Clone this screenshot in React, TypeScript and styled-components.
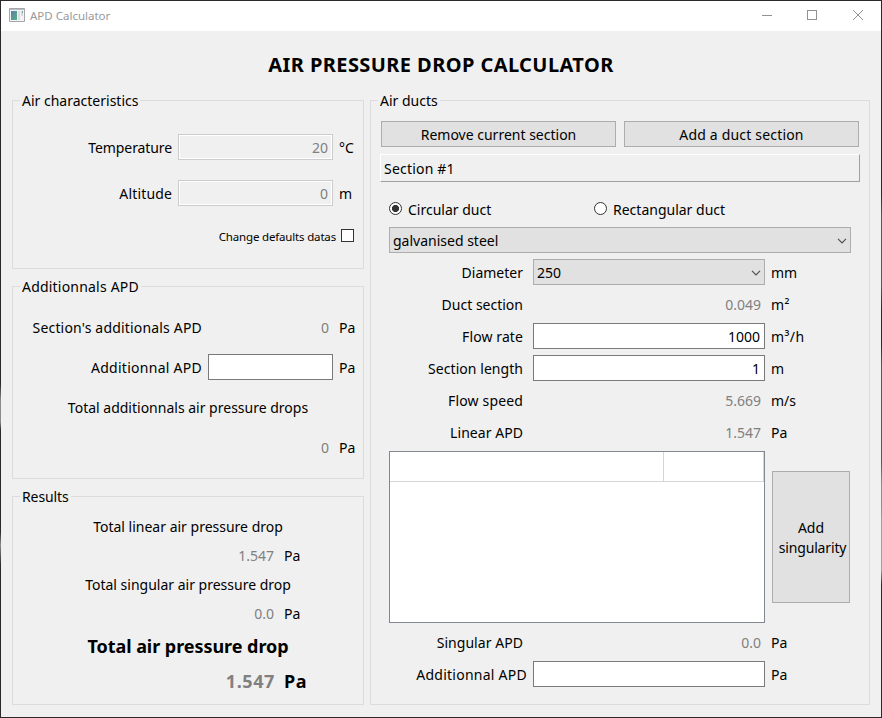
import React from 'react';
import styled, { createGlobalStyle, css } from 'styled-components';

const GlobalStyle = createGlobalStyle`
  * { box-sizing: border-box; }
  body {
    margin: 0;
    background: #f0f0f0;
    font-family: "Noto Sans", "Open Sans", sans-serif;
    font-size: 14px;
    line-height: 20px;
    color: #000;
  }
`;

const Window = styled.div`
  width: 882px;
  height: 718px;
  padding: 1px;
  background:
    linear-gradient(#2c282b 0 384px, #8a8a8a 400px 422px, #2c282b 430px 532px, #8a8a8a 545px, #2c282b 565px) left / 1px 100% no-repeat,
    linear-gradient(#2c282c 0 195px, #a8343c 215px 285px, #2c282c 310px 345px, #a8343c 365px 462px, #b08a4a 485px 505px, #a8ac3c 520px 570px, #2c282c 585px) right / 1px 100% no-repeat,
    #2c282b;
`;

const TitleBar = styled.header`
  display: flex;
  align-items: flex-start;
  height: 30px;
  padding-left: 8px;
  background: #fff;
`;

const WindowTitle = styled.span`
  flex: 1;
  padding: 5px 0 0 5px;
  font-size: 11.5px;
  color: #999;
`;

const AppIcon = styled.svg`
  display: block;
  width: 16px;
  height: 14px;
  margin-top: 7px;
`;

const WindowControls = styled.svg`
  display: block;
  width: 110px;
  height: 12px;
  margin: 8px 10px 0 0;
  fill: none;
  stroke: #929292;
`;

const Body = styled.main`
  display: flex;
  flex-direction: column;
  height: 686px;
  padding: 19px 11px 12px;
  background: #f0f0f0;
`;

const Heading = styled.h1`
  margin: 0;
  height: 50px;
  font-size: 20px;
  line-height: 30px;
  font-weight: 700;
  letter-spacing: 0.42px;
  text-align: center;
`;

const Columns = styled.div`
  display: grid;
  grid-template-columns: 352px 500px;
  column-gap: 6px;
`;

const LeftColumn = styled.div`
  display: flex;
  flex-direction: column;
  gap: 17px;
`;

const Group = styled.section<{ $height: number }>`
  display: flex;
  flex-direction: column;
  height: ${(p) => p.$height}px;
  border: 1px solid #dcdcdc;
`;

const Legend = styled.h2<{ $track?: number }>`
  align-self: flex-start;
  flex: none;
  margin: -10px 0 0 7px;
  padding: 0 2px;
  height: 20px;
  font-size: 14px;
  font-weight: 400;
  letter-spacing: ${(p) => p.$track ?? 0}px;
  background: #f0f0f0;
`;

const Row = styled.div<{ $top?: number }>`
  display: flex;
  flex: none;
  align-items: center;
  height: 26px;
  margin-top: ${(p) => p.$top ?? 0}px;
`;

type TextProps = { $track?: number; $bold?: boolean };

const textStyle = css<TextProps>`
  padding-top: 2px;
  white-space: nowrap;
  letter-spacing: ${(p) => p.$track ?? 0}px;
  ${(p) => p.$bold && 'font-size: 18px; font-weight: 700; line-height: 24px;'}
`;

const Label = styled.label<TextProps & { $width: number }>`
  ${textStyle}
  width: ${(p) => p.$width}px;
  text-align: right;
`;

const Unit = styled.span<TextProps & { $gap?: number }>`
  ${textStyle}
  margin-left: ${(p) => p.$gap ?? 6}px;
`;

const Value = styled.output<TextProps & { $width: number }>`
  ${textStyle}
  width: ${(p) => p.$width}px;
  color: #808080;
  text-align: right;
`;

const Caption = styled.span<TextProps>`
  ${textStyle}
  width: 100%;
  text-align: center;
`;

const Field = styled.input<{ $width: number; $gap?: number }>`
  width: ${(p) => p.$width}px;
  height: 26px;
  margin: 0 0 0 ${(p) => p.$gap ?? 5}px;
  padding: 0 4px 0 2px;
  border: 1px solid #7a7a7a;
  border-radius: 0;
  outline: 0;
  background: #fff;
  color: #000;
  font: inherit;
  text-align: right;

  &:disabled {
    border-color: #ccc;
    background: #f0f0f0;
    box-shadow: inset 0 0 0 1px #fff;
    color: #808080;
  }
`;

const CheckRow = styled.label`
  display: flex;
  justify-content: flex-end;
  align-items: center;
  height: 20px;
  margin: 20px 9px 0 0;
  gap: 5px;
  font-size: 11.5px;
  letter-spacing: -0.17px;
`;

const CheckText = styled.span`
  padding-top: 2px;
`;

const CheckBox = styled.input`
  appearance: none;
  width: 13px;
  height: 13px;
  margin: 0 0 2px;
  border: 1px solid #333;
  background: #fff;
`;

const Button = styled.button<{ $track?: number }>`
  width: 235px;
  height: 26px;
  padding: 2px 0 0;
  border: 1px solid #adadad;
  border-radius: 0;
  background: #e1e1e1;
  color: #000;
  font: inherit;
  letter-spacing: ${(p) => p.$track ?? 0}px;
`;

const TallButton = styled(Button)`
  display: flex;
  flex-direction: column;
  align-items: center;
  justify-content: center;
  width: 78px;
  height: 132px;
  margin-left: 7px;
`;

const SecondLine = styled.span`
  padding-left: 3px;
  letter-spacing: -0.15px;
`;

const ButtonBar = styled.div`
  display: flex;
  gap: 8px;
  margin: 10px 0 0 10px;
`;

const SectionHeader = styled.div`
  flex: none;
  width: 480px;
  height: 28px;
  margin: 7px 0 0 9px;
  padding: 4px 0 0 3px;
  border: 1px solid #fff;
  border-right-color: #a0a0a0;
  border-bottom-color: #a0a0a0;
  letter-spacing: 0.2px;
`;

const RadioRow = styled.div`
  display: grid;
  flex: none;
  grid-template-columns: 205px 1fr;
  height: 26px;
  margin: 14px 0 0 18px;
`;

const RadioLabel = styled.label`
  display: flex;
  align-items: center;
  gap: 6px;
`;

const RadioText = styled.span`
  padding-top: 2px;
`;

const Radio = styled.input`
  appearance: none;
  width: 13px;
  height: 13px;
  margin: 0 0 1px;
  border: 1px solid #333;
  border-radius: 50%;
  background: #fff;

  &:checked {
    background: radial-gradient(circle, #333 0 3.2px, #fff 3.9px);
  }
`;

const Combo = styled.div<{ $width: number; $gap: number }>`
  display: flex;
  flex: none;
  align-items: center;
  justify-content: space-between;
  width: ${(p) => p.$width}px;
  height: 26px;
  margin-left: ${(p) => p.$gap}px;
  padding: 2px 3px 0;
  border: 1px solid #adadad;
  background: #e1e1e1;
`;

const Chevron = styled.svg`
  width: 10px;
  height: 6px;
  fill: none;
  stroke: #505050;
  stroke-width: 1.2;
`;

const TableArea = styled.div`
  display: flex;
  flex: none;
  align-items: center;
  margin: 6px 0 0 18px;
`;

const Table = styled.div`
  width: 376px;
  height: 172px;
  border: 1px solid #828790;
  background: #fff;
`;

const TableHeader = styled.div`
  display: grid;
  grid-template-columns: 274px 100px;
  height: 30px;
`;

const HeaderCell = styled.div`
  border: solid #d5d5d5;
  border-width: 0 1px 1px 0;
`;

function ComboBox({ text, width, gap }: { text: string; width: number; gap: number }) {
  return (
    <Combo $width={width} $gap={gap}>
      <span>{text}</span>
      <Chevron viewBox="0 0 10 6"><path d="M1 .8 5 4.8 9 .8" /></Chevron>
    </Combo>
  );
}

type ReadoutProps = { label: string; value: string; unit: string; top?: number; track?: number; unitTrack?: number };

function Readout({ label, value, unit, top = 6, track, unitTrack }: ReadoutProps) {
  return (
    <Row $top={top}>
      <Label $width={152} $track={track}>{label}</Label>
      <Value $width={238}>{value}</Value>
      <Unit $gap={10} $track={unitTrack}>{unit}</Unit>
    </Row>
  );
}

export default function App() {
  return (
    <>
      <GlobalStyle />
      <Window>
        <TitleBar>
          <AppIcon viewBox="0 0 16 14">
            <defs>
              <linearGradient id="pane" x1="0" y1="0" x2="1" y2="1">
                <stop offset="0" stopColor="#5b7fa6" />
                <stop offset="1" stopColor="#58b08a" />
              </linearGradient>
            </defs>
            <path d="M.5.5h15v13H.5z" fill="#f4f4f4" stroke="#a3a7ab" />
            <path d="M1 1h14v1H1z" fill="#b9bdc2" />
            <path d="M2 3h6v9H2z" fill="url(#pane)" />
            <path d="M9 3h2v9H9z" fill="#dedede" />
            <path d="M12 3h2v5h-2z" fill="#cfe0da" />
            <path d="M13 3h1v2h-1z" fill="#7ba894" />
          </AppIcon>
          <WindowTitle>APD Calculator</WindowTitle>
          <WindowControls viewBox="0 0 110 12">
            <path d="M1 6.5h10M46.5 1.5h9v9h-9z" shapeRendering="crispEdges" />
            <path d="m92 1 10 10M102 1 92 11" />
          </WindowControls>
        </TitleBar>
        <Body>
          <Heading>AIR PRESSURE DROP CALCULATOR</Heading>
          <Columns>
            <LeftColumn>
              <Group $height={169}>
                <Legend>Air characteristics</Legend>
                <Row $top={23}>
                  <Label $width={159} $track={-0.1}>Temperature</Label>
                  <Field $width={155} $gap={6} defaultValue="20" disabled />
                  <Unit>°C</Unit>
                </Row>
                <Row $top={20}>
                  <Label $width={159} $track={0.15}>Altitude</Label>
                  <Field $width={155} $gap={6} defaultValue="0" disabled />
                  <Unit>m</Unit>
                </Row>
                <CheckRow>
                  <CheckText>Change defaults datas</CheckText>
                  <CheckBox type="checkbox" />
                </CheckRow>
              </Group>

              <Group $height={193}>
                <Legend $track={0.2}>Additionnals APD</Legend>
                <Row $top={17}>
                  <Label $width={189} $track={0.18}>Section's additionals APD</Label>
                  <Value $width={127}>0</Value>
                  <Unit $gap={10}>Pa</Unit>
                </Row>
                <Row $top={14}>
                  <Label $width={189} $track={0.27}>Additionnal APD</Label>
                  <Field $width={125} $gap={6} />
                  <Unit>Pa</Unit>
                </Row>
                <Row $top={14}><Caption>Total additionnals air pressure drops</Caption></Row>
                <Row $top={14}>
                  <Value $width={316}>0</Value>
                  <Unit $gap={10}>Pa</Unit>
                </Row>
              </Group>

              <Group $height={209}>
                <Legend $track={-0.1}>Results</Legend>
                <Row $top={6}><Caption>Total linear air pressure drop</Caption></Row>
                <Row $top={3}>
                  <Value $width={261}>1.547</Value>
                  <Unit $gap={10}>Pa</Unit>
                </Row>
                <Row $top={3}><Caption>Total singular air pressure drop</Caption></Row>
                <Row $top={3}>
                  <Value $width={261}>0.0</Value>
                  <Unit $gap={10}>Pa</Unit>
                </Row>
                <Row $top={6}><Caption $bold $track={-0.05}>Total air pressure drop</Caption></Row>
                <Row $top={9}>
                  <Value $width={262} $bold $track={0.6}>1.547</Value>
                  <Unit $gap={9} $bold $track={0.6}>Pa</Unit>
                </Row>
              </Group>
            </LeftColumn>

            <Group $height={605}>
              <Legend>Air ducts</Legend>
              <ButtonBar>
                <Button>Remove current section</Button>
                <Button $track={0.18}>Add a duct section</Button>
              </ButtonBar>
              <SectionHeader>Section #1</SectionHeader>
              <RadioRow>
                <RadioLabel><Radio type="radio" name="shape" defaultChecked /><RadioText>Circular duct</RadioText></RadioLabel>
                <RadioLabel><Radio type="radio" name="shape" /><RadioText>Rectangular duct</RadioText></RadioLabel>
              </RadioRow>
              <Row $top={5}><ComboBox text="galvanised steel" width={462} gap={18} /></Row>
              <Row $top={6}>
                <Label $width={152}>Diameter</Label>
                <ComboBox text="250" width={232} gap={10} />
                <Unit>mm</Unit>
              </Row>
              <Readout label="Duct section" value="0.049" unit="m²" unitTrack={0.4} />
              <Row $top={6}>
                <Label $width={152} $track={0.1}>Flow rate</Label>
                <Field $width={232} $gap={10} defaultValue="1000" />
                <Unit $track={0.4}>m³/h</Unit>
              </Row>
              <Row $top={6}>
                <Label $width={152} $track={0.05}>Section length</Label>
                <Field $width={232} $gap={10} defaultValue="1" />
                <Unit>m</Unit>
              </Row>
              <Readout label="Flow speed" value="5.669" unit="m/s" track={0.15} />
              <Readout label="Linear APD" value="1.547" unit="Pa" track={0.05} />
              <TableArea>
                <Table>
                  <TableHeader><HeaderCell /><HeaderCell /></TableHeader>
                </Table>
                <TallButton>
                  <span>Add</span>
                  <SecondLine>singularity</SecondLine>
                </TallButton>
              </TableArea>
              <Readout label="Singular APD" value="0.0" unit="Pa" track={0.05} />
              <Row $top={6}>
                <Label $width={156} $track={0.25}>Additionnal APD</Label>
                <Field $width={232} $gap={6} />
                <Unit>Pa</Unit>
              </Row>
            </Group>
          </Columns>
        </Body>
      </Window>
    </>
  );
}
